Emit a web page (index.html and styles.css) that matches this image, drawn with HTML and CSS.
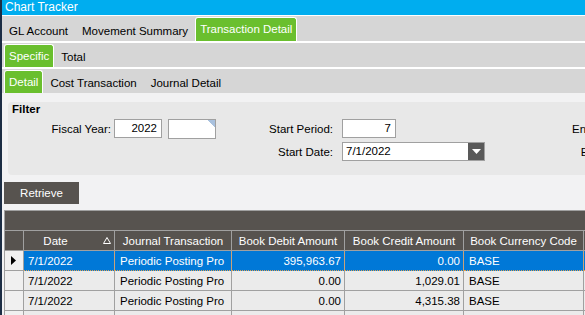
FILE: index.html
```html
<!DOCTYPE html>
<html>
<head>
    <title>Chart Tracker</title>
    <link rel="stylesheet" href="styles.css">
</head>
<body>
    <div class="window">
        <div class="titlebar">Chart Tracker</div>

        <div class="tabstrip">
            <div class="tabs top">
                <span class="tab">GL Account</span>
                <span class="tab">Movement Summary</span>
                <span class="tab active">Transaction Detail</span>
            </div>
            <div class="tabs">
                <span class="tab active">Specific</span>
                <span class="tab">Total</span>
            </div>
            <div class="tabs">
                <span class="tab active">Detail</span>
                <span class="tab">Cost Transaction</span>
                <span class="tab">Journal Detail</span>
            </div>
        </div>

        <div class="content">
            <div class="filter">
                <div class="filter-title">Filter</div>
                <div class="filter-grid">
                    <span class="label">Fiscal Year:</span>
                    <div class="field num">2022</div>
                    <div class="field corner"></div>
                    <span class="label wide">Start Period:</span>
                    <div class="field num period">7</div>
                    <span class="label">End Period:</span>

                    <span></span>
                    <span></span>
                    <span></span>
                    <span class="label wide">Start Date:</span>
                    <div class="combo">
                        <span class="combo-text">7/1/2022</span>
                        <span class="drop">
                            <svg width="9" height="5" viewBox="0 0 9 5"><polygon points="0,0 9,0 4.5,5" fill="#fff"/></svg>
                        </span>
                    </div>
                    <span class="label">End Date:</span>
                </div>
            </div>

            <button class="retrieve">Retrieve</button>

            <div class="grid">
                <div class="group-band"></div>
                <table>
                    <thead>
                        <tr>
                            <th class="c-sel"></th>
                            <th class="c-date">
                                <div class="th-inner">
                                    <span>Date</span>
                                    <svg width="8" height="7" viewBox="0 0 8 7"><polygon points="0.5,6.5 4,0.5 7.5,6.5" fill="none" stroke="#fff"/></svg>
                                </div>
                            </th>
                            <th class="c-journal">Journal Transaction</th>
                            <th class="c-debit">Book Debit Amount</th>
                            <th class="c-credit">Book Credit Amount</th>
                            <th class="c-cur">Book Currency Code</th>
                            <th class="c-extra"></th>
                        </tr>
                    </thead>
                    <tbody>
                        <tr class="selected">
                            <td class="sel">
                                <svg width="5" height="9" viewBox="0 0 5 9"><polygon points="0,0 5,4.5 0,9" fill="#000"/></svg>
                            </td>
                            <td>7/1/2022</td>
                            <td class="journal">Periodic Posting Pro</td>
                            <td class="amount">395,963.67</td>
                            <td class="amount">0.00</td>
                            <td class="cur">BASE</td>
                            <td></td>
                        </tr>
                        <tr>
                            <td class="sel"></td>
                            <td>7/1/2022</td>
                            <td class="journal">Periodic Posting Pro</td>
                            <td class="amount">0.00</td>
                            <td class="amount">1,029.01</td>
                            <td class="cur">BASE</td>
                            <td></td>
                        </tr>
                        <tr>
                            <td class="sel"></td>
                            <td>7/1/2022</td>
                            <td class="journal">Periodic Posting Pro</td>
                            <td class="amount">0.00</td>
                            <td class="amount">4,315.38</td>
                            <td class="cur">BASE</td>
                            <td></td>
                        </tr>
                        <tr class="empty">
                            <td class="sel"></td>
                            <td></td>
                            <td></td>
                            <td></td>
                            <td></td>
                            <td></td>
                            <td></td>
                        </tr>
                    </tbody>
                </table>
            </div>
        </div>
    </div>
</body>
</html>
```

FILE: styles.css
```css
* {
    margin: 0;
    padding: 0;
    box-sizing: border-box;
}

body {
    font-family: "Liberation Sans", Arial, sans-serif;
    font-size: 11.5px;
    color: #000;
    background: #f2f2f3;
    overflow: hidden;
}

.window {
    width: 585px;
    height: 315px;
    border-left: 2px solid #1c2d44;
    background: #f2f2f3;
    overflow: hidden;
}

.titlebar {
    height: 15px;
    line-height: 15px;
    background: #00adef;
    color: #fff;
    font-size: 12px;
    padding-left: 3px;
}

/* tab strips */
.tabstrip {
    background: #fff;
    padding-top: 1px;
    display: flex;
    flex-direction: column;
    gap: 2px;
}

.tabs {
    display: flex;
    height: 24px;
    background: #d6d6d6;
    padding-left: 2px;
}

.tabs.top {
    height: 25px;
    padding-left: 0;
}

.tab {
    display: flex;
    align-items: center;
    padding: 4px 7px 0;
    white-space: nowrap;
}

.tab.active {
    background: #6abf2e;
    color: #fff;
    margin-top: 1px;
    padding: 0 4px 1px;
    border: 1px solid #fff;
    border-bottom: none;
    border-radius: 3px 3px 0 0;
}

/* filter */
.content {
    padding: 9px 0 0 0;
}

.filter {
    margin-left: 6px;
    height: 73px;
    background: #e8e8e8;
    border-radius: 4px 0 0 4px;
    padding-left: 4px;
}

.filter-title {
    font-weight: bold;
    line-height: 14px;
}

.filter-grid {
    display: grid;
    grid-template-columns: 106px 54px 48px 126px 230px 63px;
    grid-template-rows: 19px 19px;
    row-gap: 4px;
    margin-top: 3px;
    margin-left: -4px;
    align-items: center;
    white-space: nowrap;
}

.label {
    text-align: right;
    padding-right: 3px;
}

.label.wide {
    padding-right: 9px;
}

.field {
    width: 48px;
    height: 19px;
    background: #fff;
    border: 1px solid #a0a0a0;
}

.field.num {
    text-align: right;
    padding-right: 4px;
    line-height: 17px;
}

.field.period {
    width: 54px;
}

.field.corner {
    height: 20px;
    align-self: start;
    background: linear-gradient(225deg, #a9c1de 5px, #fff 5px);
}

.combo {
    width: 143px;
    height: 19px;
    border: 1px solid #a0a0a0;
    background: #fff;
    display: flex;
}

.combo-text {
    flex: 1;
    padding-left: 3px;
    line-height: 17px;
}

.drop {
    width: 16px;
    background: #595959;
    display: flex;
    align-items: center;
    justify-content: center;
}

.retrieve {
    display: block;
    margin: 7px 0 0 2px;
    width: 75px;
    height: 22px;
    border: none;
    background: #57534f;
    color: #fff;
    font-family: inherit;
    font-size: 11.5px;
}

/* grid */
.grid {
    margin: 6px 0 0 2px;
    border-top: 1px solid #a0a0a0;
    border-left: 1px solid #a0a0a0;
}

.group-band {
    height: 20px;
    background: #57534f;
    border-bottom: 1px solid #a0a0a0;
}

table {
    border-collapse: separate;
    border-spacing: 0;
    table-layout: fixed;
    width: 579px;
}

th, td {
    height: 20px;
    padding: 0 4px;
    border-right: 1px solid #a0a0a0;
    border-bottom: 1px solid #a0a0a0;
    white-space: nowrap;
    overflow: hidden;
    text-align: left;
}

th {
    background: #57534f;
    color: #fff;
    font-weight: normal;
    text-align: center;
    padding: 0;
}

td {
    background: #ebebeb;
}

.c-sel { width: 19px; }
.c-date { width: 91px; }
.c-journal { width: 117px; }
.c-debit { width: 113px; }
.c-credit { width: 119px; }
.c-cur { width: 120px; }
.c-extra { width: 100px; }

.th-inner {
    display: flex;
    align-items: center;
}

.th-inner span {
    flex: 1;
    text-align: center;
    padding-right: 16px;
}

.th-inner svg {
    margin-right: 3px;
}

td.sel {
    background: #f0f0f0;
    padding: 0 0 0 6px;
}

td.sel svg {
    display: block;
}

td.journal {
    padding-left: 5px;
}

td.amount {
    text-align: right;
    padding-right: 3px;
}

td.cur {
    padding-left: 5px;
}

.selected td {
    background: #0078d7;
    color: #fff;
    border-bottom: 1px dotted #e0a050;
    border-right-color: #c9a27a;
}

.selected td.sel {
    background: #f0f0f0;
    border-bottom: 1px solid #a0a0a0;
    border-right-color: #a0a0a0;
}
```
